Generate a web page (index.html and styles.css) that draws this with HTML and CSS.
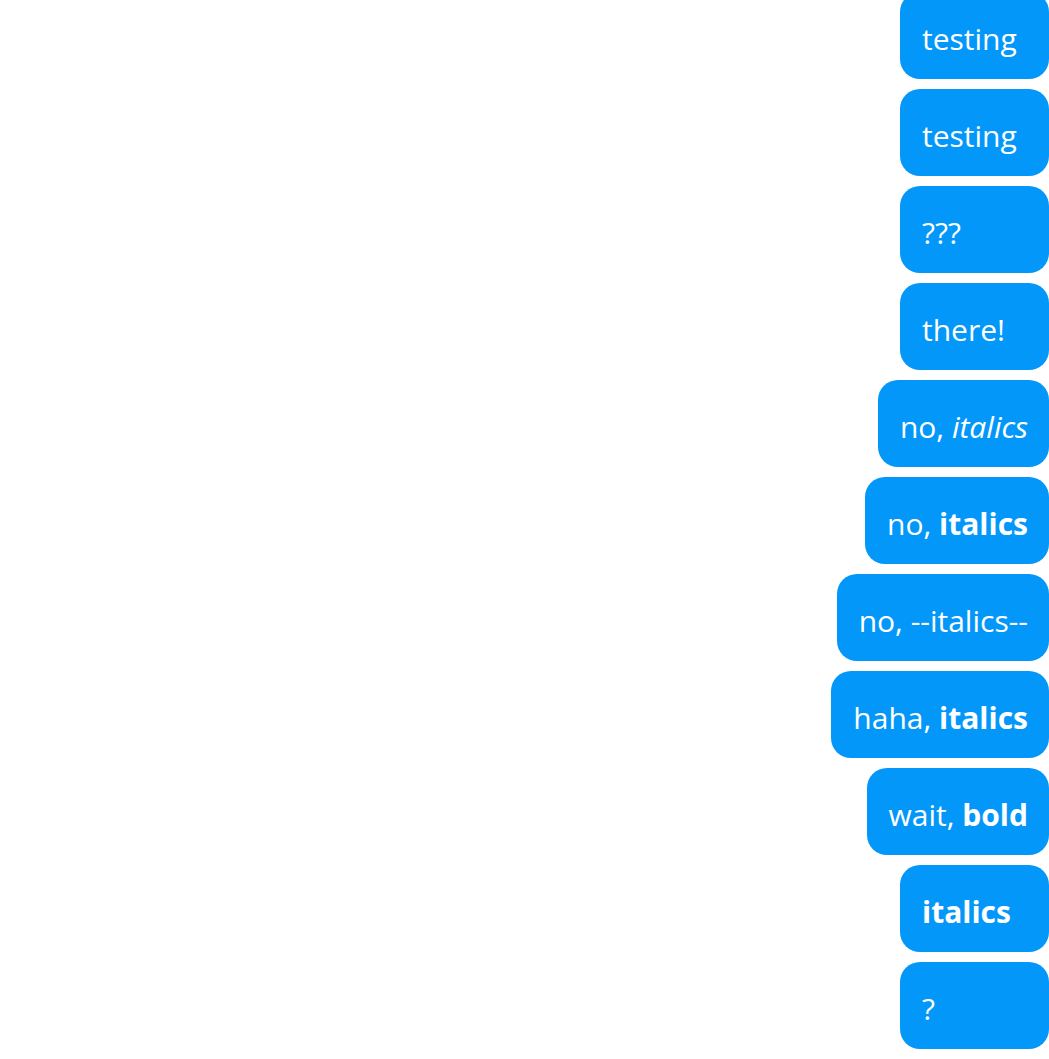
FILE: index.html
```html
<!DOCTYPE html>
<html lang="en">
<head>
  <meta charset="UTF-8" />
  <title>Chat</title>
  <link rel="stylesheet" href="styles.css">
</head>
<body>

<div class="chat">
  <div class="bubble">testing</div>
  <div class="bubble">testing</div>
  <div class="bubble">???</div>
  <div class="bubble">there!</div>
  <div class="bubble">no, <em>italics</em></div>
  <div class="bubble">no, <strong>italics</strong></div>
  <div class="bubble">no, --italics--</div>
  <div class="bubble">haha, <strong>italics</strong></div>
  <div class="bubble">wait, <strong>bold</strong></div>
  <div class="bubble"><strong>italics</strong></div>
  <div class="bubble">?</div>
</div>

</body>
</html>
```

FILE: styles.css
```css
* { margin: 0; padding: 0; box-sizing: border-box; }

body {
  font-family: 'Open Sans', 'Noto Sans', sans-serif;
  background: #fff;
  overflow: hidden;
}

.chat {
  height: 100vh;
  display: flex;
  flex-direction: column;
  justify-content: flex-end;
  align-items: flex-end;
  gap: 10px;
  padding: 0 0 10px 0;
  overflow: hidden;
}

.bubble {
  flex-shrink: 0;
  min-width: 149px;
  height: 87px;
  padding: 6px 21px 0 22px;
  line-height: 81px;
  background: #0397fa;
  color: #fff;
  border-radius: 20px;
  font-size: 30px;
  white-space: nowrap;
}

.bubble strong { font-weight: 700; }
```
